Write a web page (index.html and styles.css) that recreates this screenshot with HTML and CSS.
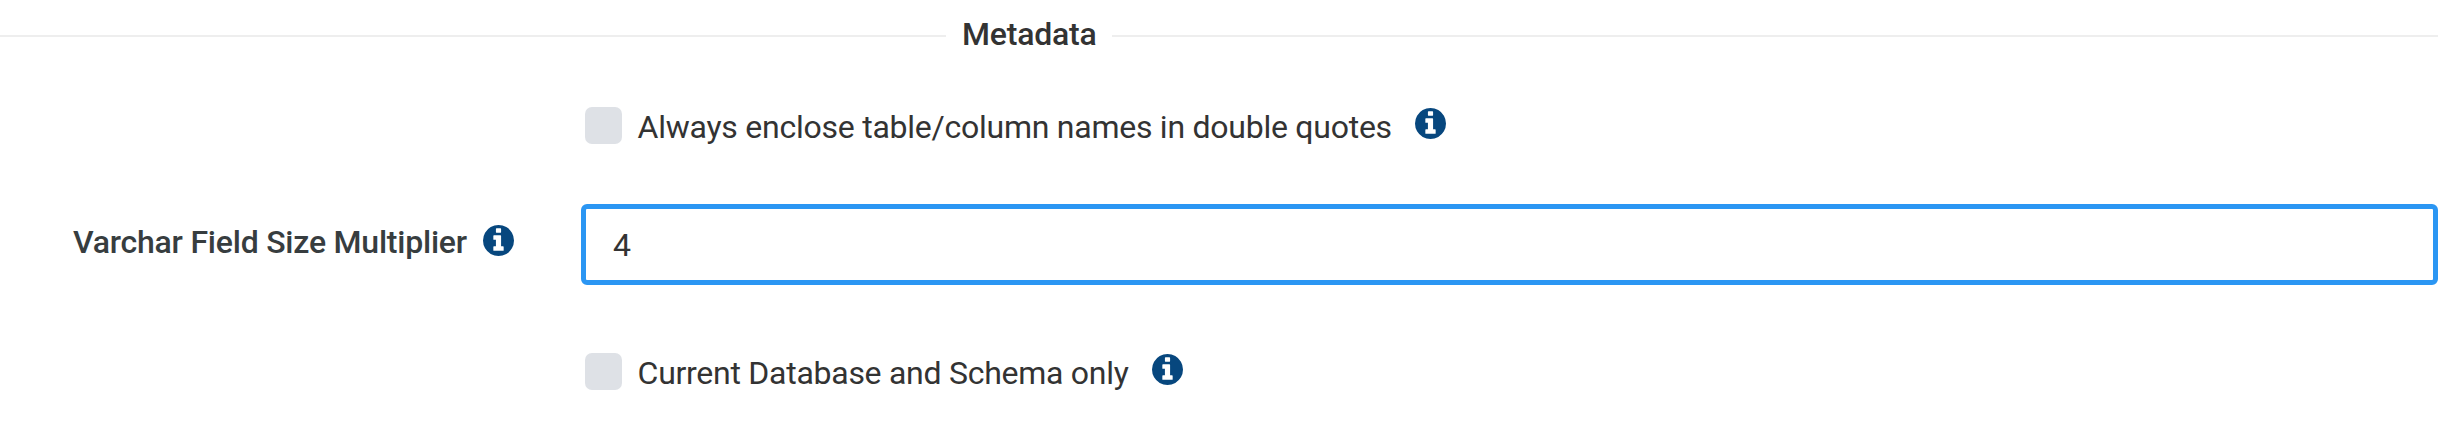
FILE: index.html
```html
<!DOCTYPE html>
<html lang="en"><head><meta charset="utf-8"><title>Metadata</title><link rel="stylesheet" href="styles.css"></head>
<body>
<svg class="defs"><symbol id="info" viewBox="0 128 1536 1536"><path fill="#07477e" d="M1024 1376v-160q0-14-9-23t-23-9h-96v-512q0-14-9-23t-23-9h-320q-14 0-23 9t-9 23v160q0 14 9 23t23 9h96v320h-96q-14 0-23 9t-9 23v160q0 14 9 23t23 9h448q14 0 23-9t9-23zm-128-896v-160q0-14-9-23t-23-9h-192q-14 0-23 9t-9 23v160q0 14 9 23t23 9h192q14 0 23-9t9-23zm640 416q0 209-103 385.5t-279.5 279.5-385.5 103-385.5-103-279.5-279.5-103-385.5 103-385.5 279.5-279.5 385.5-103 385.5 103 279.5 279.5 103 385.5z"/></symbol></svg>
<form class="panel">
<div class="divider"><span class="title">Metadata</span></div>
<label class="check first"><input type="checkbox" class="box"><span>Always enclose table/column names in double quotes</span><svg class="info"><use href="#info"/></svg></label>
<div class="field"><label class="name" for="m">Varchar Field Size Multiplier<svg class="info"><use href="#info"/></svg></label><input id="m" class="input" value="4"></div>
<label class="check second"><input type="checkbox" class="box"><span>Current Database and Schema only</span><svg class="info"><use href="#info"/></svg></label>
</form>
</body></html>
```
FILE: styles.css
```css
*{box-sizing:border-box}
body{margin:0;background:#fff;color:#333;font:400 32px/40px Roboto,sans-serif;letter-spacing:-.25px}
.defs{position:absolute;width:0;height:0}
.panel{width:2438px;height:426px;overflow:hidden}
.divider{display:flex;align-items:center;height:72px}
.divider::before,.divider::after{content:"";height:2px;background:#eee}
.divider::before{width:946px}
.divider::after{flex:1}
.title{width:166px;padding:0 0 4px 16px;font-weight:500;letter-spacing:-.2px;white-space:nowrap}
.check{display:flex;align-items:flex-start;height:37px;margin-left:585px}
.first{margin-top:35px}
.box{appearance:none;width:37px;height:37px;margin:0 15.6px 0 0;border-radius:7px;background:#dee1e6}
.info{width:31px;height:31px}
.check .info{margin:.5px 0 0 23.6px}
.field{display:flex;height:81px;margin-top:60px}
.name{display:flex;align-items:center;width:581px;padding:0 0 5px 73px;color:#373d3f;font-weight:500;letter-spacing:-.22px}
.name .info{margin:0 0 3px 16px}
.input{flex:1;border:5px solid #2b96f3;border-radius:6px;padding:1px 27px 0;font:inherit;color:inherit;outline:none}
.second{margin-top:68px;letter-spacing:-.27px}
```
